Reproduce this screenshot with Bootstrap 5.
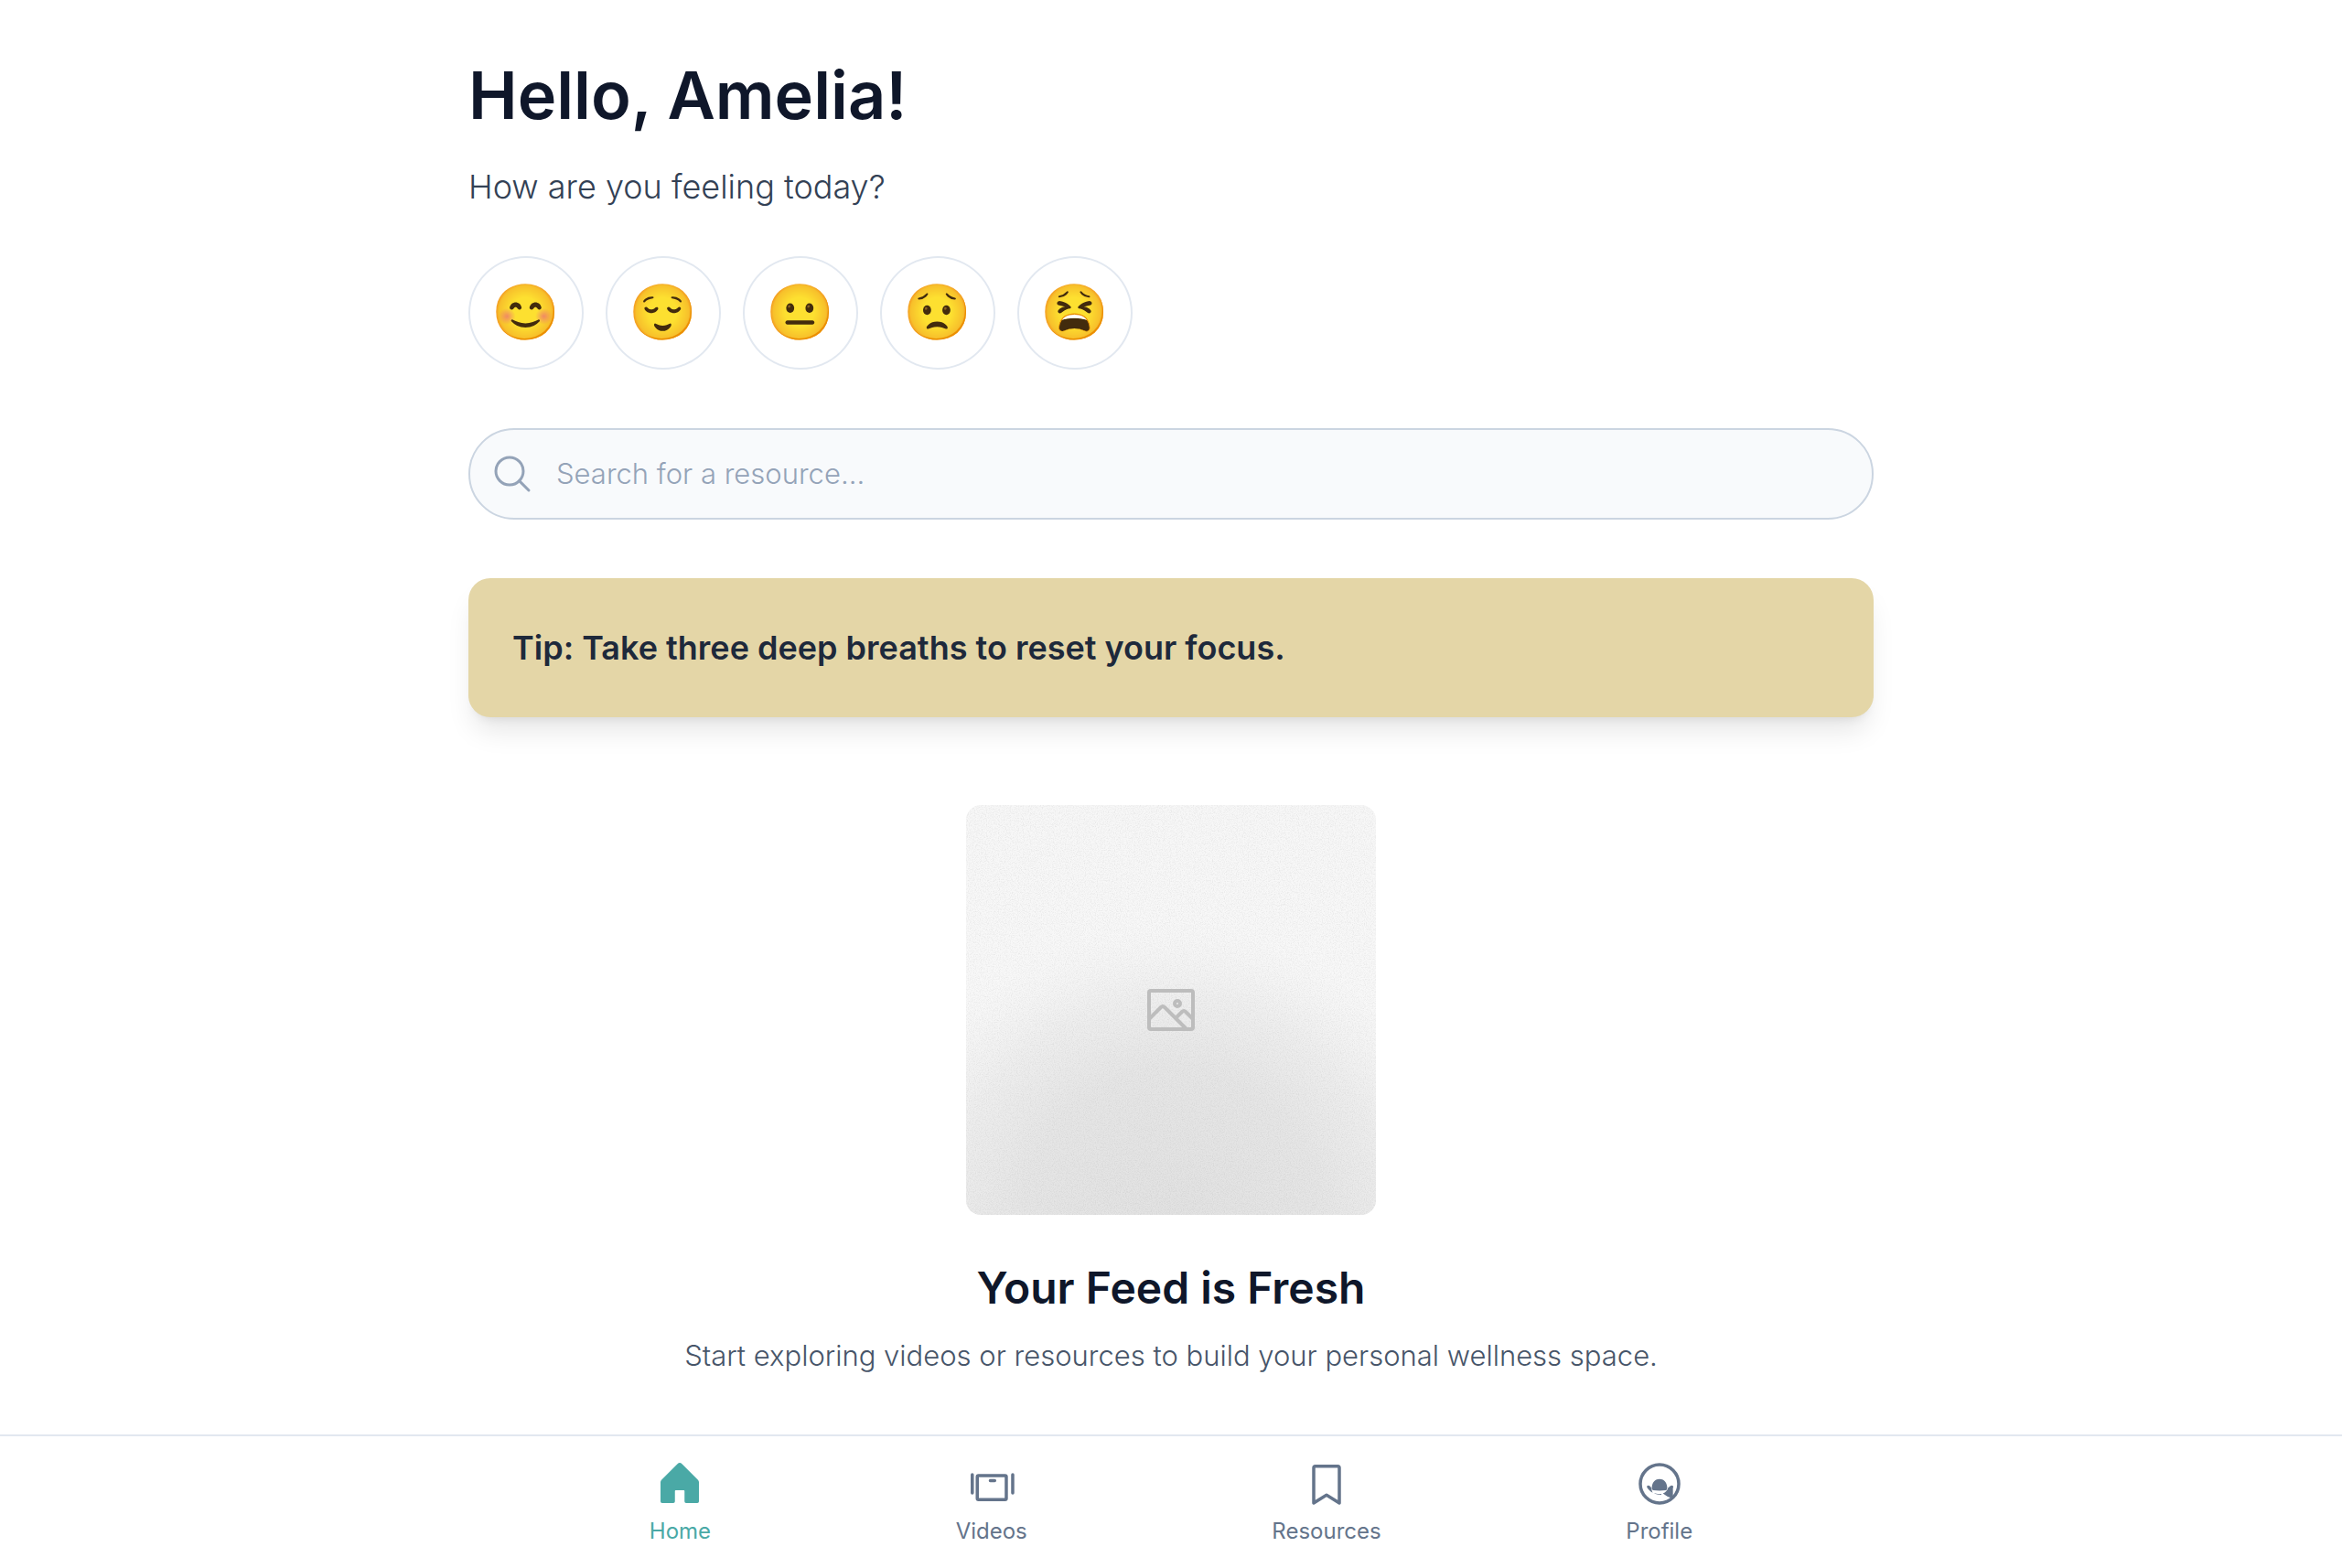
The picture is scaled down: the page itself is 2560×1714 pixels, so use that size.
<!DOCTYPE html>
<html lang="en">
<head>
<meta charset="utf-8">
<meta name="viewport" content="width=device-width, initial-scale=1">
<title>Home</title>
<link href="https://cdn.jsdelivr.net/npm/bootstrap@5.3.0/dist/css/bootstrap.min.css" rel="stylesheet">
<style>
  body { font-family: Inter, sans-serif; color: #0f172a; background: #fff; }
  .page { max-width: 1536px; padding-top: 64px; padding-bottom: 206px; }
  .greeting { font-size: 72px; line-height: 80px; font-weight: 600; }
  .question { font-size: 36px; line-height: 56px; font-weight: 300; color: #334155; margin: 32px 0 48px; }
  .moods { gap: 24px; margin-bottom: 64px; }
  .mood { width: 126px; height: 124px; border: 2px solid #e2e8f0; border-radius: 50%; background: #fff; font-family: "Noto Color Emoji", sans-serif; font-size: 60px; line-height: 72px; }
  .searchbar { height: 100px; padding: 0 22px; gap: 24px; border: 2px solid #cbd5e1; border-radius: 50px; background: #f8fafc; color: #94a3b8; margin-bottom: 64px; }
  .searchbar input { font-size: 31px; line-height: 48px; font-weight: 300; color: #334155; outline: 0; min-width: 0; }
  .searchbar input::placeholder { color: #94a3b8; opacity: 1; }
  .tip { padding: 48px; border-radius: 24px; background: #e4d6a7; color: #1e293b; font-size: 36px; line-height: 56px; font-weight: 600; box-shadow: 0 20px 30px -6px rgba(0,0,0,.1), 0 8px 12px -8px rgba(0,0,0,.1); margin-bottom: 96px; }
  .thumb { width: 448px; height: 448px; border-radius: 16px; }
  .feed-title { font-size: 48px; line-height: 64px; font-weight: 600; margin: 48px 0 16px; }
  .feed-text { font-size: 31px; line-height: 52px; font-weight: 300; color: #475569; }
  .tabs { border-top: 2px solid #e2e8f0; background: #fff; }
  .tabs-inner { max-width: 1536px; padding: 24px 64px; }
  .tab { gap: 8px; font-size: 24px; line-height: 32px; color: #64748b; text-decoration: none; }
  .tab.active { color: #4aa9a6; }
  .tab svg { width: 56px; height: 56px; }
</style>
</head>
<body>
<main class="page container-fluid px-0">
  <h1 class="greeting mb-0">Hello, Amelia!</h1>
  <p class="question">How are you feeling today?</p>
  <div class="moods d-flex flex-wrap" role="group" aria-label="Mood">
    <button type="button" class="mood p-0 d-flex align-items-center justify-content-center">😊</button>
    <button type="button" class="mood p-0 d-flex align-items-center justify-content-center">😌</button>
    <button type="button" class="mood p-0 d-flex align-items-center justify-content-center">😐</button>
    <button type="button" class="mood p-0 d-flex align-items-center justify-content-center">😟</button>
    <button type="button" class="mood p-0 d-flex align-items-center justify-content-center">😫</button>
  </div>
  <label class="searchbar d-flex align-items-center">
    <svg class="flex-shrink-0" width="48" height="48" viewBox="0 0 256 256" fill="none" stroke="currentColor" stroke-width="16" stroke-linecap="round" aria-hidden="true"><circle cx="112" cy="112" r="80"/><path d="M168.6 168.6 224 224"/></svg>
    <input class="flex-grow-1 border-0 bg-transparent p-0" type="search" placeholder="Search for a resource..." aria-label="Search for a resource">
  </label>
  <div class="tip">Tip: Take three deep breaths to reset your focus.</div>
  <section class="d-flex flex-column align-items-center text-center">
    <svg class="thumb" viewBox="0 0 448 448" role="img" aria-label="Image placeholder">
      <defs>
        <linearGradient id="base" x1="0" y1="0" x2="0" y2="1"><stop offset="0" stop-color="#f7f7f7"/><stop offset=".45" stop-color="#f8f8f8"/><stop offset="1" stop-color="#f2f2f2"/></linearGradient>
        <radialGradient id="mound" gradientUnits="userSpaceOnUse" cx="224" cy="448" r="320"><stop offset="0" stop-color="#e2e2e2"/><stop offset=".5" stop-color="#e4e4e4" stop-opacity=".9"/><stop offset=".75" stop-color="#e6e6e6" stop-opacity=".5"/><stop offset="1" stop-color="#f0f0f0" stop-opacity="0"/></radialGradient>
        <filter id="grain" x="0" y="0" width="100%" height="100%" color-interpolation-filters="sRGB"><feTurbulence type="fractalNoise" baseFrequency=".85" numOctaves="2" seed="4"/><feColorMatrix values="0 0 0 0 .45  0 0 0 0 .45  0 0 0 0 .45  1.2 0 0 0 -.5"/></filter>
      </defs>
      <rect width="448" height="448" fill="url(#base)"/>
      <rect width="448" height="448" fill="url(#mound)"/>
      <rect width="448" height="448" filter="url(#grain)" opacity=".22"/>
      <g fill="none" stroke="#bdbdbd" stroke-width="4" stroke-linejoin="round">
        <rect x="200" y="203" width="48" height="42" rx="2"/>
        <path d="m200 234 13-13q2-2 4 0l24 24M230 232l6-6q2-2 4 0l8 8"/>
        <circle cx="231" cy="217" r="3"/>
      </g>
    </svg>
    <h2 class="feed-title">Your Feed is Fresh</h2>
    <p class="feed-text mb-0">Start exploring videos or resources to build your personal wellness space.</p>
  </section>
</main>
<nav class="tabs fixed-bottom" aria-label="Main">
  <div class="tabs-inner container-fluid d-flex justify-content-around">
    <a href="#" class="tab active d-flex flex-column align-items-center" aria-current="page">
      <svg viewBox="0 0 256 256" fill="currentColor" aria-hidden="true"><path d="M224,120v96a8,8,0,0,1-8,8H160a8,8,0,0,1-8-8V164a4,4,0,0,0-4-4H108a4,4,0,0,0-4,4v52a8,8,0,0,1-8,8H40a8,8,0,0,1-8-8V120a16,16,0,0,1,4.69-11.31l80-80a16,16,0,0,1,22.62,0l80,80A16,16,0,0,1,224,120Z"/></svg>
      Home</a>
    <a href="#" class="tab d-flex flex-column align-items-center">
      <svg viewBox="0 0 256 256" fill="none" stroke="currentColor" stroke-width="16" stroke-linecap="round" aria-hidden="true"><rect x="56" y="87" width="145" height="120" rx="6"/><path d="M31 82v92M233 82v92M121 112h22"/></svg>
      Videos</a>
    <a href="#" class="tab d-flex flex-column align-items-center">
      <svg viewBox="0 0 256 256" fill="currentColor" aria-hidden="true"><path d="M184,32H72A16,16,0,0,0,56,48V224a8,8,0,0,0,12.24,6.78L128,193.43l59.77,37.35A8,8,0,0,0,200,224V48A16,16,0,0,0,184,32Zm0,177.57-51.77-32.35a8,8,0,0,0-8.48,0L72,209.57V48H184Z"/></svg>
      Resources</a>
    <a href="#" class="tab d-flex flex-column align-items-center">
      <svg viewBox="0 0 256 256" fill="currentColor" aria-hidden="true"><circle cx="128" cy="128" r="96" fill="none" stroke="currentColor" stroke-width="16"/><path d="M90 143c2-24 18-39 38-39s36 15 38 39c1 9-1 14-5 17q-33 4-66 0c-4-4-6-9-5-17Z"/><path d="M66 138c4-4 10-3 14 1l8 10c0 9 2 16 6 23-10-5-20-14-27-24-2-4-3-7-1-10ZM100 174c13 5 24 6 36 4 2 0 2 5 0 5-14 0-26-2-36-9ZM145 176c14-5 22-14 25-27l11-10c5-4 11-4 15 0 2 3 1 6-1 9v52c-18-2-35-12-50-24Z"/></svg>
      Profile</a>
  </div>
</nav>
<script src="https://cdn.jsdelivr.net/npm/bootstrap@5.3.0/dist/js/bootstrap.bundle.min.js"></script>
</body>
</html>
